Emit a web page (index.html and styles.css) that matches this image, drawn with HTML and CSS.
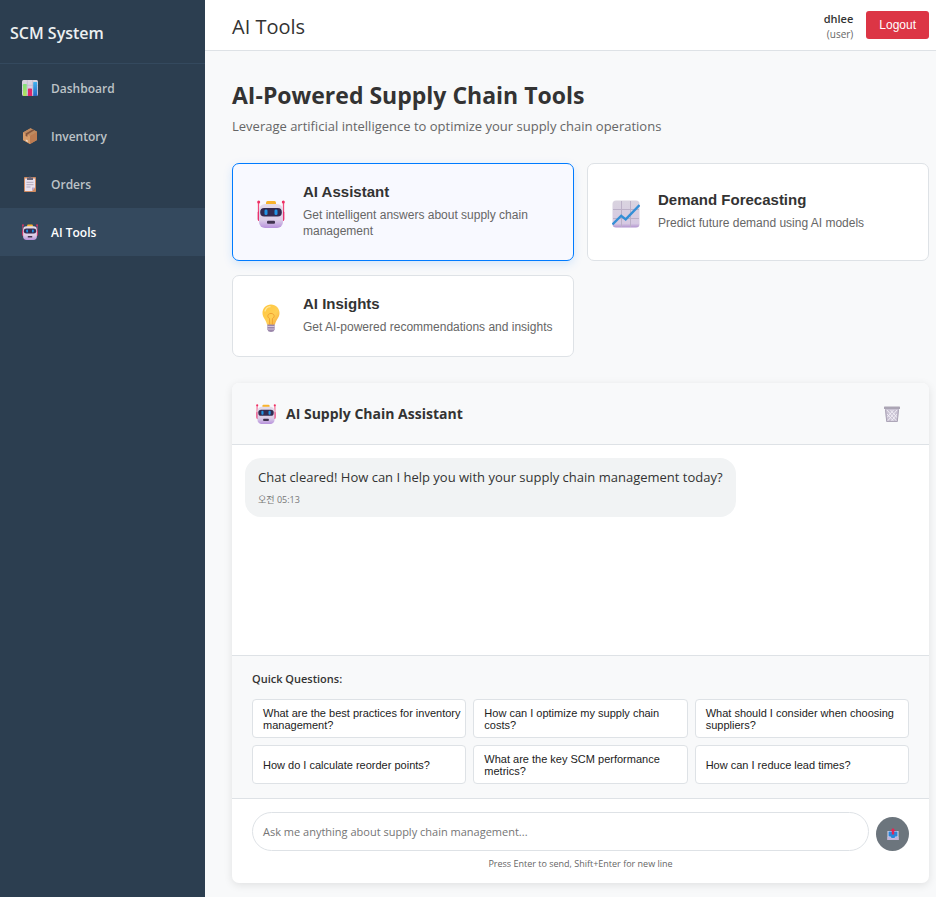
FILE: index.html
```html
<!DOCTYPE html>
<html lang="en">
<head>
<meta charset="utf-8">
<meta name="viewport" content="width=device-width, initial-scale=1">
<title>SCM System - AI Tools</title>
<link rel="stylesheet" href="styles.css">
</head>
<body>
<svg class="sprite" width="0" height="0" aria-hidden="true">
  <defs>
    <linearGradient id="face" x1="0" y1="0" x2="0" y2="1"><stop offset="0" stop-color="#e3dbe9"/><stop offset=".65" stop-color="#dccfe8"/><stop offset="1" stop-color="#b892dc"/></linearGradient>
    <linearGradient id="paper" x1="0" y1="0" x2="0" y2="1"><stop offset="0" stop-color="#d9d3df"/><stop offset=".85" stop-color="#d6c9e2"/><stop offset="1" stop-color="#b294cf"/></linearGradient>
    <linearGradient id="gold" x1="0" y1="0" x2="1" y2="1"><stop offset="0" stop-color="#ffc63b"/><stop offset=".6" stop-color="#ffcf55"/><stop offset="1" stop-color="#f5a83c"/></linearGradient>
    <linearGradient id="blue" x1="0" y1="0" x2="0" y2="1"><stop offset="0" stop-color="#3fb1ef"/><stop offset="1" stop-color="#2468c4"/></linearGradient>
    <linearGradient id="green" x1="0" y1="0" x2="0" y2="1"><stop offset="0" stop-color="#7fe07c"/><stop offset="1" stop-color="#b4e05c"/></linearGradient>
  </defs>
  <symbol id="robot" viewBox="0 0 28 28">
    <path d="M1.500 2v17M26.500 2v17" stroke="#f04a7c" stroke-width="1.300"/>
    <circle cx="1.700" cy="1.900" r="1.500" fill="#ee2f62"/><circle cx="26.300" cy="1.900" r="1.500" fill="#ee2f62"/>
    <rect x=".7" y="11" width="3.500" height="10" rx="1.500" fill="#e8326f"/><rect x="23.800" y="11" width="3.500" height="10" rx="1.500" fill="#e8326f"/>
    <rect x="9" y="1" width="10" height="5" rx="1.500" fill="#f9b42c"/>
    <rect x="2" y="4" width="24" height="24" rx="6" fill="url(#face)"/>
    <rect x="3.200" y="8" width="21.600" height="8.500" rx="4" fill="#332b50"/>
    <rect x="7.500" y="9.500" width="3" height="5.500" rx="1.300" fill="#2095e5"/><rect x="17.500" y="9.500" width="3" height="5.500" rx="1.300" fill="#2095e5"/>
    <rect x="10" y="20.800" width="8" height="3" rx="1" fill="#40334f"/>
  </symbol>
  <symbol id="bars" viewBox="0 0 16 16">
    <rect width="16" height="16" rx="1.500" fill="url(#paper)"/>
    <path d="M5.300 0v16M10.700 0v16M0 5.300h16M0 10.700h16" stroke="#bcb1c9" stroke-width=".6"/>
    <rect x="1" y="4" width="3.700" height="12" rx=".6" fill="url(#green)"/>
    <rect x="6" y="8.500" width="4" height="7.500" rx=".6" fill="#df2768"/>
    <rect x="11.200" y="2" width="4" height="14" rx=".6" fill="url(#blue)"/>
  </symbol>
  <symbol id="box" viewBox="0 0 16 16">
    <path d="M1 4.500 8.500.3 15 3.700v8.200L8 16l-7-4z" fill="#c98c5b"/>
    <path d="m1 4.500 7 3.300V16l-7-4z" fill="#d79c6a"/>
    <path d="m8 7.800 7-4.100v8.200L8 16z" fill="#bd7c52"/>
    <path d="M1 4.500 8.500.3 15 3.700 8 7.800z" fill="#bf8a60"/>
    <path d="m3.600 5.400 7-4 1.800.9-7 4.100v2.400l-1.800-.9z" fill="#82543d"/>
    <path d="m3.800 11.400 2 1v1.600l-2-1z" fill="#f3dfd0"/>
  </symbol>
  <symbol id="clipboard" viewBox="0 0 16 16">
    <rect x="2" y="1" width="12" height="15" rx=".8" fill="#cf8a60"/>
    <path d="M3 2.500h10v9L10 15H3z" fill="#e8e1ef"/>
    <path d="M13 11.500 10 15v-3.500z" fill="#bca8cf"/>
    <path d="M4.500 6.300h7M4.500 8.700h7M4.500 11h4" stroke="#aaa1b6" stroke-width=".9"/>
    <path d="M5 4V1.500h2a1 1 0 0 1 2 0h2V4z" fill="#6b6577"/>
  </symbol>
  <symbol id="trend" viewBox="0 0 28 28">
    <rect x=".5" y=".5" width="27" height="27" rx="3.500" fill="url(#paper)"/>
    <path d="M9.500 1v26M18.500 1v26M1 9.500h26M1 18.500h26" stroke="#bbb0c7" stroke-width="1"/>
    <path d="m.5 24.500 8.700-8.700 4.500 3.600L27.500 5" fill="none" stroke="#348fd6" stroke-width="2.300"/>
  </symbol>
  <symbol id="bulb" viewBox="0 0 28 28">
    <path d="M10.300 20h7.400v5.500q-.7 2.500-3.700 2.500t-3.700-2.500z" fill="#9a86aa"/>
    <path d="M10.300 22.500h7.400M10.300 25h7.400" stroke="#d3c6db" stroke-width="1"/>
    <path d="M14 .5c-5 0-8.500 3.800-8.500 8.400 0 4.800 3.700 6.700 4.500 11.600h8c.8-4.900 4.500-6.800 4.500-11.600C22.500 4.300 19 .5 14 .5z" fill="url(#gold)"/>
    <path d="M12.600 20.500v-6c-2.600-1-2.500-4.900 1.400-5.100 3.900.2 4 4.100 1.400 5.100v6" fill="none" stroke="#f0a132" stroke-width="1"/>
    <path d="M8 7q1.500-4 5-4.300" fill="none" stroke="#ffe59a" stroke-width="1.300" stroke-linecap="round"/>
  </symbol>
  <symbol id="bin" viewBox="0 0 16 16">
    <path d="M1 2h14l-1.400 14H2.400z" fill="#c9c2d3"/>
    <path d="m3 4 9.500 11M6.500 4l7 8M3 8l7 7.500M13 4 3.500 15M9.500 4 3 11.500M13 8l-6 7.500" stroke="#f3f0f7" stroke-width=".9"/>
    <path d="M1.500 3.500 2.700 15.400h10.600l1.200-11.900" fill="none" stroke="#aaa3b5"/>
    <rect y=".5" width="16" height="2.500" rx=".6" fill="#aba5b4"/>
  </symbol>
  <symbol id="outbox" viewBox="0 0 12 12">
    <path d="M.5 3h11v9H.5z" fill="#e3dbee"/>
    <path d="M1.500 3.500h9v5h-2L7.500 10h-3l-1-1.500h-2z" fill="#2a86dc"/>
    <path d="M.5 9h3l1 1.200h3L8.500 9h3v3H.5z" fill="#c4b5da"/>
    <path d="M6 0 8.700 2.900H7.200v3.600H4.800V2.900H3.300z" fill="#e32556"/>
  </symbol>
</svg>
<div class="app">
  <aside class="sidebar">
    <div class="brand">SCM System</div>
    <nav class="nav">
      <a class="nav-link" href="#dashboard"><svg class="icon-sm"><use href="#bars"/></svg>Dashboard</a>
      <a class="nav-link" href="#inventory"><svg class="icon-sm"><use href="#box"/></svg>Inventory</a>
      <a class="nav-link" href="#orders"><svg class="icon-sm"><use href="#clipboard"/></svg>Orders</a>
      <a class="nav-link active" href="#ai-tools" aria-current="page"><svg class="icon-sm"><use href="#robot"/></svg>AI Tools</a>
    </nav>
  </aside>
  <div class="main">
    <header class="topbar">
      <h1 class="topbar-title">AI Tools</h1>
      <div class="user">
        <div class="user-info"><span class="user-name">dhlee</span><span class="user-role">(user)</span></div>
        <button class="logout" type="button">Logout</button>
      </div>
    </header>
    <main class="content">
      <h2 class="page-title">AI-Powered Supply Chain Tools</h2>
      <p class="page-subtitle">Leverage artificial intelligence to optimize your supply chain operations</p>
      <div class="tools">
        <button class="tool selected" type="button">
          <svg class="icon-lg"><use href="#robot"/></svg>
          <span class="tool-text"><span class="tool-name">AI Assistant</span><span class="tool-desc">Get intelligent answers about supply chain management</span></span>
        </button>
        <button class="tool" type="button">
          <svg class="icon-lg"><use href="#trend"/></svg>
          <span class="tool-text"><span class="tool-name">Demand Forecasting</span><span class="tool-desc">Predict future demand using AI models</span></span>
        </button>
        <button class="tool" type="button">
          <svg class="icon-lg"><use href="#bulb"/></svg>
          <span class="tool-text"><span class="tool-name">AI Insights</span><span class="tool-desc">Get AI-powered recommendations and insights</span></span>
        </button>
      </div>
      <section class="chat">
        <header class="chat-header">
          <svg class="icon-md"><use href="#robot"/></svg>
          <h3 class="chat-title">AI Supply Chain Assistant</h3>
          <button class="clear" type="button" aria-label="Clear chat"><svg class="icon-sm"><use href="#bin"/></svg></button>
        </header>
        <div class="messages">
          <div class="message">
            <p class="message-text">Chat cleared! How can I help you with your supply chain management today?</p>
            <time class="message-time" lang="ko">오전 05:13</time>
          </div>
        </div>
        <div class="quick">
          <h4 class="quick-title">Quick Questions:</h4>
          <div class="quick-grid">
            <button class="question" type="button">What are the best practices for inventory management?</button>
            <button class="question" type="button">How can I optimize my supply chain costs?</button>
            <button class="question" type="button">What should I consider when choosing suppliers?</button>
            <button class="question" type="button">How do I calculate reorder points?</button>
            <button class="question" type="button">What are the key SCM performance metrics?</button>
            <button class="question" type="button">How can I reduce lead times?</button>
          </div>
        </div>
        <form class="composer">
          <div class="composer-row">
            <textarea class="prompt" rows="1" aria-label="Message" placeholder="Ask me anything about supply chain management..."></textarea>
            <button class="send" type="button" aria-label="Send"><svg class="icon-xs"><use href="#outbox"/></svg></button>
          </div>
          <p class="hint">Press Enter to send, Shift+Enter for new line</p>
        </form>
      </section>
    </main>
  </div>
</div>
</body>
</html>
```
FILE: styles.css
```css
* { box-sizing: border-box; }

body {
  margin: 0;
  background: #f8f9fa;
  color: #333;
  font-family: "Open Sans", "Noto Sans CJK KR", sans-serif;
  font-size: 13px;
}

h1, h2, h3, h4, p { margin: 0; }
button { font-family: "Liberation Sans", Arial, sans-serif; cursor: pointer; }
svg { display: block; flex: none; }

.sprite { position: absolute; }
.icon-xs { width: 12px; height: 12px; }
.icon-sm { width: 16px; height: 16px; }
.icon-md { width: 20px; height: 20px; }
.icon-lg { width: 28px; height: 28px; }

.app { display: flex; min-height: 100vh; }

.sidebar { flex: none; width: 205px; background: #2c3e50; }
.brand {
  padding: 21px 10px 18px;
  border-bottom: 1px solid #34495e;
  color: #ecf0f1;
  font-size: 16px;
  font-weight: 600;
  line-height: 24px;
}
.nav-link {
  display: flex;
  align-items: center;
  gap: 13px;
  height: 48px;
  padding: 0 22px;
  color: #bdc3c7;
  font-size: 12px;
  font-weight: 600;
  text-decoration: none;
}
.nav-link.active { background: #34495e; color: #fff; }

.main { display: flex; flex: 1; flex-direction: column; min-width: 0; }
.topbar {
  display: flex;
  align-items: center;
  justify-content: space-between;
  min-height: 51px;
  padding: 0 7px 0 27px;
  border-bottom: 1px solid #dee2e6;
  background: #fff;
}
.topbar-title { padding-top: 4px; font-size: 20px; font-weight: 500; line-height: 28px; }
.user { display: flex; align-items: center; gap: 13px; }
.user-info { display: flex; flex-direction: column; align-items: flex-end; padding-top: 2px; }
.user-name { font-size: 11px; font-weight: 600; line-height: 16px; }
.user-role { color: #666; font-size: 10px; line-height: 14px; }
.logout {
  height: 28px;
  padding: 0 13px;
  border: 0;
  border-radius: 3px;
  background: #dc3545;
  color: #fff;
  font-size: 12px;
}

.content {
  display: flex;
  flex: 1;
  flex-direction: column;
  padding: 27px 7px 14px 27px;
}
.page-title { font-size: 23px; font-weight: 700; line-height: 34px; }
.page-subtitle { margin-top: 4px; color: #666; font-size: 13px; line-height: 20px; }

.tools {
  display: grid;
  grid-template-columns: 1fr 1fr;
  gap: 14px 13px;
  margin-top: 27px;
}
.tool {
  display: flex;
  align-items: center;
  gap: 18px;
  padding: 19px 16px 16px 24px;
  border: 1px solid #dee2e6;
  border-radius: 7px;
  background: #fff;
  color: #333;
  text-align: left;
}
.tool.selected {
  border-color: #007bff;
  background: #f8f9ff;
  box-shadow: 0 3px 10px rgba(0, 123, 255, 0.15);
}
.tool-name { display: block; margin-bottom: 6px; font-size: 15px; font-weight: 700; line-height: 18px; }
.tool-desc { display: block; color: #666; font-size: 12px; line-height: 16px; }
.tool-text { padding-bottom: 5px; }

.chat {
  display: flex;
  flex: 1;
  flex-direction: column;
  margin-top: 26px;
  overflow: hidden;
  border-radius: 7px;
  background: #fff;
  box-shadow: 0 2px 8px rgba(0, 0, 0, 0.1);
}
.chat-header {
  display: flex;
  align-items: center;
  gap: 10px;
  min-height: 62px;
  padding: 0 20px 0 24px;
  border-bottom: 1px solid #dee2e6;
  background: #f8f9fa;
}
.chat-title { flex: 1; font-size: 14px; font-weight: 700; line-height: 20px; }
.clear { padding: 7px 9px; border: 0; background: transparent; }
.messages { flex: 1; padding: 13px; }
.message {
  width: fit-content;
  max-width: 80%;
  padding: 10px 13px;
  border-radius: 16px;
  background: #f1f3f4;
}
.message-text { font-size: 13px; line-height: 19px; }
.message-time { display: block; margin-top: 6px; color: #777; font-size: 9px; line-height: 14px; }

.quick {
  padding: 13px 20px 14px;
  border-top: 1px solid #dee2e6;
  border-bottom: 1px solid #dee2e6;
  background: #f8f9fa;
}
.quick-title { font-size: 11px; font-weight: 600; line-height: 20px; }
.quick-grid {
  display: grid;
  grid-template-columns: repeat(3, 1fr);
  gap: 7px;
  margin-top: 10px;
}
.question {
  min-height: 39px;
  padding: 6px 4px 6px 10px;
  border: 1px solid #dee2e6;
  border-radius: 4px;
  background: #fff;
  color: #222;
  font-size: 11px;
  line-height: 12px;
  text-align: left;
}

.composer { padding: 13px 20px; }
.composer-row { display: flex; align-items: flex-end; gap: 7px; }
.prompt {
  flex: 1;
  min-width: 0;
  height: 39px;
  padding: 9px 10px;
  border: 1px solid #dee2e6;
  border-radius: 20px;
  color: #333;
  font-family: inherit;
  font-size: 11px;
  line-height: 19px;
  resize: none;
  overflow: hidden;
}
.prompt::placeholder { color: #757575; }
.send {
  display: flex;
  align-items: center;
  justify-content: center;
  width: 33px;
  height: 34px;
  padding: 0;
  border: 0;
  border-radius: 50%;
  background: #6c757d;
}
.hint { margin-top: 6px; color: #666; font-size: 9px; line-height: 13px; text-align: center; }
```
